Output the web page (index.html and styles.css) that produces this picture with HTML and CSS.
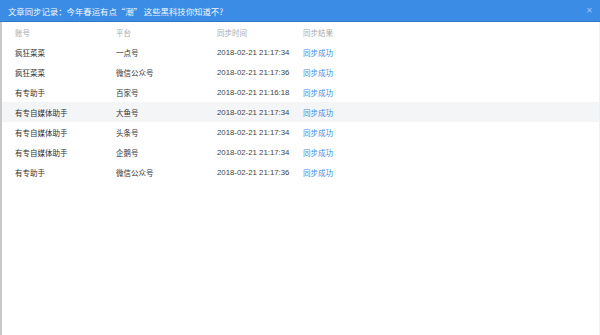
FILE: index.html
```html
<!DOCTYPE html>
<html lang="zh-CN">
<head>
<meta charset="utf-8">
<title>文章同步记录</title>
<link rel="stylesheet" href="styles.css">
</head>
<body>
<div class="dialog">
  <div class="titlebar">
    <span class="title">文章同步记录：今年春运有点“潮” 这些黑科技你知道不?</span>
    <span class="close">✕</span>
  </div>
  <div class="content">
    <div class="row head">
      <span>账号</span><span>平台</span><span>同步时间</span><span>同步结果</span>
    </div>
    <div class="row"><span>疯狂菜菜</span><span>一点号</span><span class="time">2018-02-21 21:17:34</span><span class="ok">同步成功</span></div>
    <div class="row"><span>疯狂菜菜</span><span>微信公众号</span><span class="time">2018-02-21 21:17:36</span><span class="ok">同步成功</span></div>
    <div class="row"><span>有专助手</span><span>百家号</span><span class="time">2018-02-21 21:16:18</span><span class="ok">同步成功</span></div>
    <div class="row hover"><span>有专自媒体助手</span><span>大鱼号</span><span class="time">2018-02-21 21:17:34</span><span class="ok">同步成功</span></div>
    <div class="row"><span>有专自媒体助手</span><span>头条号</span><span class="time">2018-02-21 21:17:34</span><span class="ok">同步成功</span></div>
    <div class="row"><span>有专自媒体助手</span><span>企鹅号</span><span class="time">2018-02-21 21:17:34</span><span class="ok">同步成功</span></div>
    <div class="row"><span>有专助手</span><span>微信公众号</span><span class="time">2018-02-21 21:17:36</span><span class="ok">同步成功</span></div>
  </div>
</div>
</body>
</html>
```
FILE: styles.css
```css
html, body {
  margin: 0;
  padding: 0;
  background: #fff;
}
body {
  font-family: "Liberation Sans", "Noto Sans CJK SC", sans-serif;
}
.dialog {
  width: 600px;
  height: 335px;
  display: flex;
  flex-direction: column;
  box-sizing: border-box;
}
.titlebar {
  height: 22px;
  flex: none;
  background: #3a8ce4;
  border-bottom: 1px solid #3377c4;
  box-sizing: border-box;
  display: flex;
  align-items: center;
  justify-content: space-between;
  padding: 0 7px 0 8px;
  color: #fff;
}
.title {
  font-family: "Noto Sans CJK SC", sans-serif;
  font-size: 8.4px;
  color: #f4f8fe;
}
.close {
  font-size: 8px;
  color: #9fc4f0;
}
.content {
  flex: 1;
  border-left: 2px solid #c8c8c8;
  border-right: 1px solid #f0f0f0;
}
.row {
  display: grid;
  grid-template-columns: 101px 101px 86px 1fr;
  align-items: center;
  height: 20px;
  padding-left: 13px;
  font-size: 7.5px;
  color: #333;
}
.row.head {
  color: #aaa;
}
.row.hover {
  background: #f4f5f7;
}
.time {
  color: #444;
  font-size: 7.8px;
}
.ok {
  color: #3a8ee6;
}
```
